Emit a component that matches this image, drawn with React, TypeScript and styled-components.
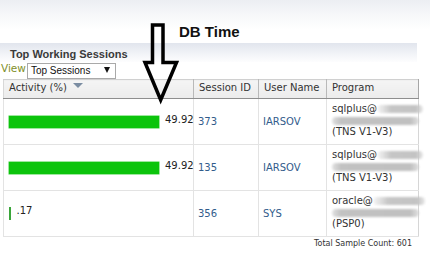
import React from "react";
import styled, { createGlobalStyle } from "styled-components";

const Global = createGlobalStyle`
  html, body { margin: 0; padding: 0; background: #ffffff; }
  body { font-family: "DejaVu Sans", sans-serif; }
`;

const Page = styled.div`
  position: relative;
  width: 430px;
  height: 259px;
  overflow: hidden;
  background: linear-gradient(180deg, #eceef2 0px, #f6f7f9 14px, #ffffff 30px);
`;

const Banner = styled.div`
  height: 43px;
  box-sizing: border-box;
  padding: 23px 0 0 179px;
`;

const BannerTitle = styled.h1`
  margin: 0;
  font: bold 15px/17px "Liberation Sans", Arial, sans-serif;
  color: #111;
`;

const PanelHead = styled.div`
  width: 417px;
  height: 19px;
  box-sizing: border-box;
  padding: 4px 0 0 10px;
  background: linear-gradient(180deg, #e1e5ed 0%, #f1f3f7 55%, #fdfdfe 100%);
`;

const PanelTitle = styled.h2`
  margin: 0;
  font: bold 11px/15px "Liberation Sans", Arial, sans-serif;
  color: #3a3a3a;
`;

const ViewRow = styled.div`
  height: 17px;
  display: flex;
  align-items: flex-start;
  padding-left: 1px;
`;

const ViewLabel = styled.span`
  margin-top: 1px;
  font: 10.5px/11px "DejaVu Sans", sans-serif;
  color: #7f8f2b;
`;

const Select = styled.div`
  margin: 1px 0 0 1px;
  width: 89px;
  height: 16px;
  box-sizing: border-box;
  display: flex;
  align-items: center;
  justify-content: space-between;
  padding: 0 5px 0 3px;
  background: #fff;
  border: 1px solid #a9a9a9;
  font: 10px/14px "Liberation Sans", Arial, sans-serif;
  color: #111;
`;

const Caret = styled.span`
  width: 0;
  height: 0;
  border-left: 3px solid transparent;
  border-right: 3px solid transparent;
  border-top: 6px solid #111;
  margin-top: -2px;
`;

const Table = styled.table`
  margin-left: 3px;
  width: 415px;
  border-collapse: collapse;
  table-layout: fixed;
  font: 10px/11.5px "DejaVu Sans", sans-serif;
  color: #222;
`;

const HeadCell = styled.th<{ $w: number }>`
  width: ${(p) => p.$w}px;
  height: 19px;
  box-sizing: border-box;
  padding: 2px 5px 0;
  vertical-align: top;
  text-align: left;
  font-weight: normal;
  line-height: 12px;
  color: #333;
  white-space: nowrap;
  background: linear-gradient(180deg, #f5f5f5 0%, #ececec 100%);
  border-top: 1px solid #d0d0d0;
  border-bottom: 1px solid #8e8e8e;
  border-left: 1px solid #b9b9b9;
  border-right: 1px solid #b9b9b9;
  &:first-child { border-left-color: #d8d8d8; }
  &:last-child { border-right-color: #a6a6a6; }
`;

const SortMark = styled.span`
  display: inline-block;
  width: 0;
  height: 0;
  margin: 0 0 3px 6px;
  border-left: 5px solid transparent;
  border-right: 5px solid transparent;
  border-top: 5px solid #7b8da2;
`;

const Row = styled.tr`
  height: 46px;
`;

const Cell = styled.td<{ $link?: boolean }>`
  padding: 0 4px;
  vertical-align: middle;
  border: 1px solid #e3e3e3;
  color: ${(p) => (p.$link ? "#325c8b" : "#262626")};
  white-space: nowrap;
  overflow: visible;
  &:last-child { border-right-color: #d6d6d6; }
`;

const ActivityWrap = styled.div`
  display: flex;
  align-items: flex-start;
  padding-left: 1px;
  gap: 6px;
`;

const Bar = styled.div<{ $thin?: boolean }>`
  height: ${(p) => (p.$thin ? 13 : 12)}px;
  flex: none;
  background: ${(p) => (p.$thin ? "#3aa53a" : "#0cc40c")};
  box-shadow: ${(p) => (p.$thin ? "none" : "0 0 0 0.5px #3fd23f")};
`;

const Pct = styled.span`
  margin-top: -1px;
  line-height: 10px;
  color: #222;
`;

const ProgramCell = styled(Cell)`
  padding: 4px 4px 6px 5px;
  vertical-align: top;
  color: #333;
`;

const Line = styled.div`
  height: 11.5px;
  display: flex;
  align-items: center;
`;

const Redact = styled.span<{ $w: number; $fade?: boolean }>`
  display: inline-block;
  flex: none;
  width: ${(p) => p.$w}px;
  height: 8px;
  margin-top: 1px;
  border-radius: 4px;
  background: ${(p) =>
    p.$fade
      ? "linear-gradient(90deg, rgba(196,196,196,0.15) 0%, #c6c6c6 30%, #c3c3c3 85%, rgba(200,200,200,0.4) 100%)"
      : "linear-gradient(90deg, rgba(196,196,196,0.5) 0%, #c2c2c2 10%, #c0c0c0 90%, rgba(196,196,196,0.5) 100%)"};
  filter: blur(1px);
`;

const Footer = styled.div`
  padding: 2px 18px 0 0;
  text-align: right;
  font: 8px/10px "DejaVu Sans", sans-serif;
  color: #333;
`;

const ArrowSvg = styled.svg`
  position: absolute;
  left: 140px;
  top: 18px;
  pointer-events: none;
`;

type Session = {
  pct: number;
  label: string;
  id: string;
  user: string;
  prog: string;
  tail: string;
};

const sessions: Session[] = [
  { pct: 49.92, label: "49.92", id: "373", user: "IARSOV", prog: "sqlplus@", tail: "(TNS V1-V3)" },
  { pct: 49.92, label: "49.92", id: "135", user: "IARSOV", prog: "sqlplus@", tail: "(TNS V1-V3)" },
  { pct: 0.17, label: ".17", id: "356", user: "SYS", prog: "oracle@", tail: "(PSP0)" },
];

export default function App() {
  return (
    <>
      <Global />
      <Page>
        <Banner>
          <BannerTitle>DB Time</BannerTitle>
        </Banner>
        <PanelHead>
          <PanelTitle>Top Working Sessions</PanelTitle>
        </PanelHead>
        <ViewRow>
          <ViewLabel>View</ViewLabel>
          <Select>
            <span>Top Sessions</span>
            <Caret />
          </Select>
        </ViewRow>
        <Table>
          <thead>
            <tr>
              <HeadCell $w={190}>
                Activity (%)
                <SortMark />
              </HeadCell>
              <HeadCell $w={65}>Session ID</HeadCell>
              <HeadCell $w={68}>User Name</HeadCell>
              <HeadCell $w={92}>Program</HeadCell>
            </tr>
          </thead>
          <tbody>
            {sessions.map((s) => {
              const thin = s.pct < 1;
              const w = thin ? 1.5 : Math.round(s.pct * 3.005);
              return (
                <Row key={s.id}>
                  <Cell>
                    <ActivityWrap>
                      <Bar $thin={thin} style={{ width: w }} />
                      <Pct>{s.label}</Pct>
                    </ActivityWrap>
                  </Cell>
                  <Cell $link>{s.id}</Cell>
                  <Cell $link>{s.user}</Cell>
                  <ProgramCell>
                    <Line>
                      {s.prog}
                      <Redact $w={thin ? 52 : 46} $fade />
                    </Line>
                    <Line>
                      <Redact $w={87} />
                    </Line>
                    <Line>{s.tail}</Line>
                  </ProgramCell>
                </Row>
              );
            })}
          </tbody>
        </Table>
        <Footer>Total Sample Count: 601</Footer>
        <ArrowSvg width="45" height="90" viewBox="0 0 45 90">
          <path
            d="M12.5 7 L23 7 L23 44.5 L36.5 44.5 L20.7 82 L5 44.5 L12.5 44.5 Z"
            fill="none"
            stroke="#000"
            strokeWidth="3.5"
            strokeLinejoin="miter"
          />
        </ArrowSvg>
      </Page>
    </>
  );
}
